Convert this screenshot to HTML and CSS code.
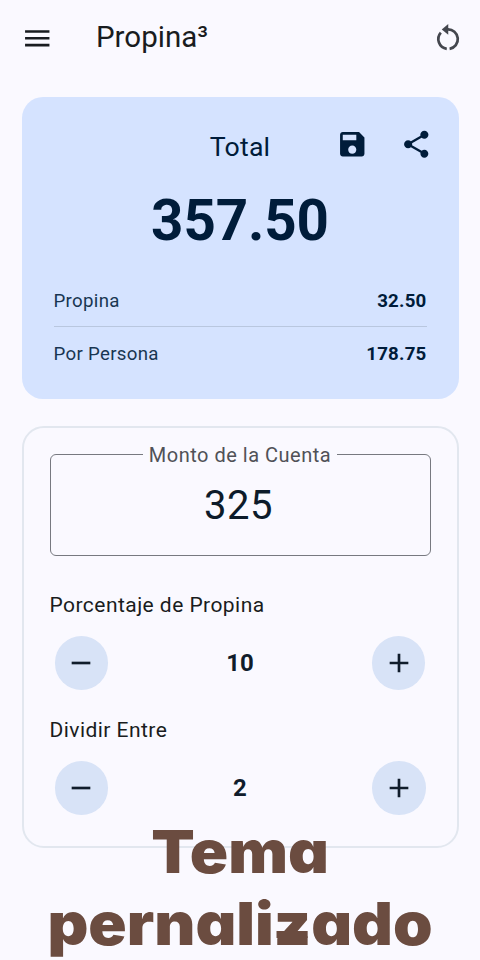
FILE: index.html
```html
<!DOCTYPE html>
<html lang="es">
<head>
<meta charset="utf-8">
<meta name="viewport" content="width=device-width, initial-scale=1">
<title>Propina³</title>
<link rel="stylesheet" href="styles.css">
</head>
<body>
<div class="app">
  <header class="appbar">
    <svg class="icon menu" viewBox="0 0 24 24"><path d="M3 18h18v-2H3v2zm0-5h18v-2H3v2zm0-7v2h18V6H3z"/></svg>
    <h1 class="title">Propina³</h1>
    <svg class="icon reset" viewBox="0 0 24 24"><path d="M11.500 5.500a7.200 7.200 0 0 1 1.500 14.300M10.900 19.800A7.200 7.200 0 0 1 6.500 7.900" class="arc"/><path d="M12 1.500v8L7.200 5.500z"/></svg>
  </header>
  <main>
    <section class="summary">
      <div class="summary-head">
        <h2 class="total-label">Total</h2>
        <svg class="icon save" viewBox="0 0 24 24"><path d="M17 3H5c-1.110 0-2 .9-2 2v14c0 1.100.890 2 2 2h14c1.100 0 2-.9 2-2V7l-4-4zm-5 16c-1.660 0-3-1.340-3-3s1.340-3 3-3 3 1.340 3 3-1.340 3-3 3zm3-10H5V5h10v4z"/></svg>
        <svg class="icon share" viewBox="0 0 24 24"><path d="M18 16.080c-.76 0-1.440.3-1.960.77L8.910 12.700c.05-.23.090-.46.090-.7s-.04-.47-.09-.7l7.050-4.110c.54.5 1.250.81 2.040.81 1.660 0 3-1.340 3-3s-1.340-3-3-3-3 1.340-3 3c0 .24.040.47.090.7L8.040 9.810C7.500 9.310 6.790 9 6 9c-1.660 0-3 1.340-3 3s1.340 3 3 3c.79 0 1.500-.31 2.040-.81l7.120 4.160c-.05.21-.08.43-.08.65 0 1.610 1.310 2.920 2.920 2.920s2.920-1.310 2.920-2.920-1.310-2.920-2.920-2.920z"/></svg>
      </div>
      <div class="total">357.50</div>
      <div class="row tip"><span>Propina</span><b>32.50</b></div>
      <div class="row"><span>Por Persona</span><b>178.75</b></div>
    </section>
    <section class="form">
      <fieldset class="amount">
        <legend>Monto de la Cuenta</legend>
        <div class="amount-value">325</div>
      </fieldset>
      <h3 class="field-label">Porcentaje de Propina</h3>
      <div class="stepper">
        <button class="step" aria-label="Menos"><svg viewBox="0 0 24 24"><path d="M19 13H5v-2h14v2z"/></svg></button>
        <b>10</b>
        <button class="step" aria-label="Más"><svg viewBox="0 0 24 24"><path d="M19 13h-6v6h-2v-6H5v-2h6V5h2v6h6v2z"/></svg></button>
      </div>
      <h3 class="field-label">Dividir Entre</h3>
      <div class="stepper">
        <button class="step" aria-label="Menos"><svg viewBox="0 0 24 24"><path d="M19 13H5v-2h14v2z"/></svg></button>
        <b>2</b>
        <button class="step" aria-label="Más"><svg viewBox="0 0 24 24"><path d="M19 13h-6v6h-2v-6H5v-2h6V5h2v6h6v2z"/></svg></button>
      </div>
    </section>
  </main>
  <div class="caption"><div>Tema</div><div>pernali<span class="barred">z</span>ado</div></div>
</div>
</body>
</html>
```
FILE: styles.css
```css
* { box-sizing: border-box; }
body { margin: 0; background: #faf9ff; font-family: Roboto, sans-serif; color: #191c20; }
.app { position: relative; width: 480px; height: 960px; overflow: hidden; }
.appbar { display: flex; align-items: center; height: 96.500px; padding: 0 16px 21px 21px; }
.icon { width: 32.500px; height: 32.500px; flex: none; fill: currentColor; }
.title { flex: 1; margin: 0 0 2px 42.500px; font-size: 29.500px; font-weight: 400; line-height: 40px; }
.reset { color: #44474e; }
.arc { fill: none; stroke: currentColor; stroke-width: 2; }
main { padding: 0 21.500px; }
.summary { height: 302px; padding: 28.500px 32px 0; border-radius: 21px; background: #d5e3ff; color: #001c3a; }
.summary-head { display: flex; align-items: center; height: 42px; margin-right: -6px; }
.total-label { flex: 1; margin: 2px 0 0; padding-left: 91px; text-align: center; font-size: 26.700px; font-weight: 400; letter-spacing: .2px; }
.save { margin: 0 32px 4px 0; }
.share { margin-bottom: 4px; }
.total { height: 107px; line-height: 109px; font-size: 56.500px; font-weight: 700; text-align: center; letter-spacing: -.1px; }
.row { display: flex; justify-content: space-between; align-items: center; height: 53px; font-size: 18.700px; letter-spacing: .3px; }
.row span { opacity: .88; }
.row b { letter-spacing: .2px; }
.tip { padding-top: 2px; border-bottom: 1px solid #b9c7df; }
.form { height: 422px; margin-top: 27.500px; padding: 13px 26px 0; border: 2px solid #e2e7ef; border-radius: 22px; }
.amount { height: 115px; margin: 0; padding: 0; border: 1.500px solid #777980; border-radius: 6px; color: #0d1b2a; }
.amount legend { position: relative; top: .5px; margin: 0 auto; padding: 0 6px; font-size: 20px; line-height: 26px; letter-spacing: .5px; color: #505157; }
.amount-value { height: 78px; line-height: 78px; margin-right: 3px; text-align: center; font-size: 40px; letter-spacing: .5px; }
.field-label { margin: 33px 0 0; height: 32px; line-height: 32px; font-size: 21px; font-weight: 400; letter-spacing: .45px; }
.stepper { display: flex; justify-content: space-between; align-items: center; height: 54px; margin-top: 15px; padding: 0 5px; font-size: 24px; color: #101c2b; }
.stepper + .field-label { margin-top: 24px; }
.step { display: flex; align-items: center; justify-content: center; width: 53.500px; height: 53.500px; padding: 0; border: 0; border-radius: 50%; background: #d8e3f7; color: inherit; }
.step svg { width: 32px; height: 32px; fill: currentColor; }
.caption { position: absolute; top: 816px; left: 0; width: 480px; text-align: center; font-family: Inter, Lato, sans-serif; font-feature-settings: "cv11" 1; font-size: 59px; font-weight: 900; line-height: 72px; color: #6b4c40; white-space: nowrap; transform: scaleX(1.074); }
.barred { position: relative; }
.barred::after { content: ""; position: absolute; left: 3px; right: 3px; top: 43px; height: 7px; background: currentColor; }
```
